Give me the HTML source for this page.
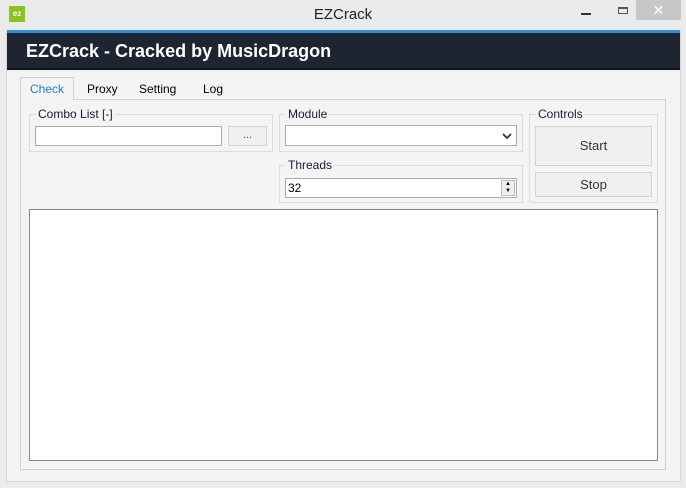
<!DOCTYPE html>
<html><head><style>
*{box-sizing:border-box;margin:0;padding:0}
body{width:686px;height:488px;background:#ebebeb;position:relative;overflow:hidden;font-family:"Liberation Sans",sans-serif;font-size:12px;color:#000}
.a{position:absolute}
.grp{position:absolute;border:1px solid #dcdcdc}
.lbl{position:absolute;top:-8px;left:6px;background:#f4f4f4;padding:0 2px;font-size:12px;color:#1a1a3a}
.tb{position:absolute;background:#fff;border:1px solid #acacac}
.btn{position:absolute;border:1px solid #cfd3e0;background:#f0f0f0;text-align:center;color:#333;font-size:13px}
</style></head><body>
<div class="a" style="left:9px;top:6px;width:16px;height:16px;background:#8cc21e;color:#fff;font-size:8px;font-weight:bold;text-align:center;line-height:16px">ez</div>
<div class="a" style="left:0;width:686px;top:6px;text-align:center;font-size:15px;color:#222">EZCrack</div>
<div class="a" style="left:581px;top:13px;width:10px;height:2px;background:#333"></div>
<div class="a" style="left:618px;top:7px;width:10px;height:7px;border:1px solid #555;border-top-width:2px"></div>
<div class="a" style="left:636px;top:0;width:45px;height:20px;background:#c7c7c7;color:#fff;text-align:center;font-size:14px;line-height:20px">✕</div>
<div class="a" style="left:6px;top:30px;width:675px;height:452px;background:#f4f4f4;border:1px solid #d6d6d6"></div>
<div class="a" style="left:7px;top:30px;width:673px;height:3px;background:#2e8fd8"></div>
<div class="a" style="left:7px;top:33px;width:673px;height:37px;background:#1c2531;border-bottom:2px solid #10161e"></div>
<div class="a" style="left:26px;top:41px;color:#fff;font-family:'Liberation Sans',sans-serif;font-weight:bold;font-size:18px">EZCrack - Cracked by MusicDragon</div>
<div class="a" style="left:20px;top:99px;width:646px;height:371px;border:1px solid #d1d1de"></div>
<div class="a" style="left:20px;top:77px;width:54px;height:23px;border:1px solid #d1d1de;border-bottom:none;background:#f4f4f4;color:#1f7bd0;text-align:center;line-height:22px">Check</div>
<div class="a" style="left:87px;top:82px">Proxy</div>
<div class="a" style="left:139px;top:82px">Setting</div>
<div class="a" style="left:203px;top:82px">Log</div>
<div class="grp" style="left:29px;top:114px;width:244px;height:38px"><span class="lbl">Combo List [-]</span></div>
<div class="tb" style="left:35px;top:126px;width:187px;height:20px"></div>
<div class="btn" style="left:228px;top:126px;width:39px;height:20px;color:#c33;line-height:16px;font-size:11px">...</div>
<div class="grp" style="left:279px;top:114px;width:244px;height:38px"><span class="lbl">Module</span></div>
<div class="tb" style="left:285px;top:125px;width:232px;height:21px"><svg class="a" style="left:216px;top:6px" width="10" height="8"><path d="M1 2l4 4 4-4" stroke="#333" stroke-width="1.8" fill="none"/></svg></div>
<div class="grp" style="left:279px;top:165px;width:244px;height:38px"><span class="lbl">Threads</span></div>
<div class="tb" style="left:285px;top:178px;width:232px;height:20px;padding:2px 0 0 2px">32<div class="a" style="left:215px;top:1px;width:14px;height:16px;border:1px solid #bbb;background:#eee;font-size:6px;line-height:7px;text-align:center">▲<br>▼</div></div>
<div class="grp" style="left:529px;top:114px;width:129px;height:89px"><span class="lbl">Controls</span></div>
<div class="btn" style="left:535px;top:126px;width:117px;height:40px;line-height:38px">Start</div>
<div class="btn" style="left:535px;top:172px;width:117px;height:25px;line-height:23px">Stop</div>
<div class="a" style="left:29px;top:209px;width:629px;height:252px;background:#fff;border:1px solid #828790"></div>
</body></html>
